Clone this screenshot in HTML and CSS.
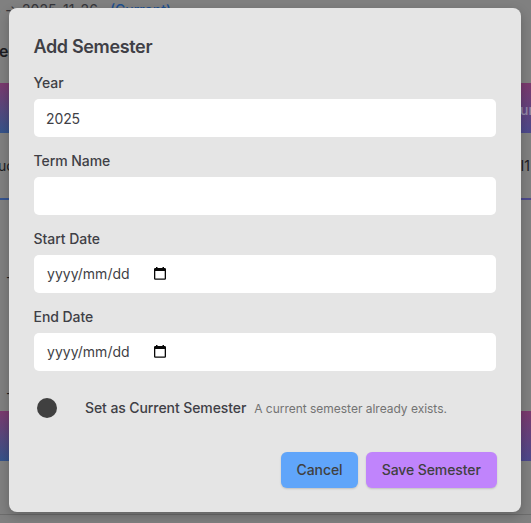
FILE: index.html
```html
<!DOCTYPE html>
<html lang="en">
<head>
<meta charset="utf-8">
<title>Add Semester</title>
<link rel="stylesheet" href="styles.css">
</head>
<body>
<main class="page">
  <p class="range"><span>5 → 2025-11-26</span><span class="current">(Current)</span></p>
  <h2 class="section-title">ec</h2>
  <div class="band"><span class="band-text">ur</span></div>
  <div class="row"><span>uc</span><span>I1</span></div>
  <div class="dashes"><span>-</span><span>-</span></div>
  <div class="band band-lower"></div>
  <div class="page-end"></div>
</main>
<div class="overlay">
  <form class="modal">
    <h1 class="title">Add Semester</h1>
    <div class="field">
      <label class="label" for="year">Year</label>
      <input class="input" id="year" type="text" value="2025">
    </div>
    <div class="field">
      <label class="label" for="term">Term Name</label>
      <input class="input" id="term" type="text">
    </div>
    <div class="field">
      <span class="label">Start Date</span>
      <div class="input date"><span class="date-text">yyyy/mm/dd</span>
        <svg class="calendar" viewBox="0 0 12 13"><path d="M2 0h1.5v1h5V0H10v1h.7Q12 1 12 2.3v9.2q0 1.3-1.3 1.3H1.3Q0 12.800 0 11.500V2.300Q0 1 1.300 1H2zM1.300 4v7.500h9.400V4z" fill="#080808" fill-rule="evenodd"/></svg>
      </div>
    </div>
    <div class="field">
      <span class="label">End Date</span>
      <div class="input date"><span class="date-text">yyyy/mm/dd</span>
        <svg class="calendar" viewBox="0 0 12 13"><path d="M2 0h1.5v1h5V0H10v1h.7Q12 1 12 2.3v9.2q0 1.3-1.3 1.3H1.3Q0 12.800 0 11.500V2.300Q0 1 1.300 1H2zM1.300 4v7.500h9.400V4z" fill="#080808" fill-rule="evenodd"/></svg>
      </div>
    </div>
    <div class="toggle-row">
      <span class="knob"></span>
      <span class="toggle-label">Set as Current Semester</span>
      <span class="hint">A current semester already exists.</span>
    </div>
    <div class="actions">
      <button class="button cancel" type="button">Cancel</button>
      <button class="button save" type="button">Save Semester</button>
    </div>
  </form>
</div>
</body>
</html>
```
FILE: styles.css
```css
* { box-sizing: border-box; }
body {
  margin: 0;
  height: 523px;
  overflow: hidden;
  background: #808080;
  color: #3f3f46;
  font-family: Inter, "Noto Sans", sans-serif;
  font-size: 14px;
}
.page { display: flex; flex-direction: column; height: 523px; overflow: hidden; color: #1c1c1f; }
.range { display: flex; gap: 12px; margin: 0 0 0 -8px; height: 38px; line-height: 19px; white-space: nowrap; color: #35353a; }
.range span:first-child { letter-spacing: .05px; }
.current { color: #1d4f8f; font-weight: 500; }
.section-title { margin: 0 0 0 -1px; height: 45px; line-height: 27px; font-size: 16px; font-weight: 600; }
.band {
  display: flex;
  justify-content: flex-end;
  flex: none;
  height: 50px;
  line-height: 53px;
  background:
    linear-gradient(180deg, #7b3a6e, rgba(123, 58, 110, 0)),
    linear-gradient(90deg, #35548a, #4d498c);
}
.band-text { width: 11px; color: #938aa8; font-weight: 500; }
.row {
  display: flex;
  justify-content: space-between;
  flex: none;
  height: 67px;
  padding-right: 1px;
  border-bottom: 2px solid;
  border-image: linear-gradient(90deg, #35548f, #4d498c) 1;
  line-height: 66px;
}
.row span:first-child { margin-left: -2px; }
.dashes { display: flex; flex-direction: column; gap: 96px; height: 211px; padding: 67px 0 0 6px; line-height: 20px; }
.page-end { height: 54px; border-bottom: 1px solid #6c6c6c; }
.overlay { position: absolute; inset: 0; padding: 8px 10.5px 11px 9.5px; }
.modal {
  height: 504px;
  margin-left: -.5px;
  padding: 25px 24.5px 24px 25px;
  border-radius: 8px;
  background: #e5e5e5;
  box-shadow: 0 4px 12px rgba(0, 0, 0, .24);
}
.title { margin: 0 0 13px -.5px; height: 27px; font-size: 18px; line-height: 27px; font-weight: 600; letter-spacing: -.35px; }
.field { height: 78px; }
.label { display: block; height: 26px; line-height: 20px; margin-left: -.5px; font-weight: 500; letter-spacing: -.05px; }
.input {
  display: flex;
  align-items: center;
  width: 100%;
  height: 38px;
  padding: 0 12px;
  border: 0;
  border-radius: 5px;
  background: #fff;
  color: #3f3f46;
  font: inherit;
  letter-spacing: -.1px;
  outline: 0;
}
.date { padding: 0 12px 2px 13px; }
.date-text { width: 107px; letter-spacing: .02px; }
.calendar { width: 12px; height: 13px; }
.toggle-row { display: flex; align-items: center; height: 20px; margin-top: 13px; white-space: nowrap; }
.knob { width: 20px; height: 20px; margin: 0 28px 0 3px; border-radius: 50%; background: #404040; }
.toggle-label { padding-bottom: 1px; font-weight: 500; letter-spacing: -.09px; }
.hint { margin-left: 8px; color: #737373; font-size: 12px; letter-spacing: -.02px; }
.actions { display: flex; justify-content: flex-end; gap: 8px; margin: 34px -.5px 0 0; }
.button {
  height: 36px;
  padding: 0;
  border: 0;
  border-radius: 6px;
  color: #404040;
  font: 500 14px/36px Inter, sans-serif;
  letter-spacing: -.1px;
  box-shadow: 0 1px 2px rgba(0, 0, 0, .16);
}
.cancel { width: 77px; background: #60a5fa; }
.save { width: 130.5px; background: #c084fc; }
```
